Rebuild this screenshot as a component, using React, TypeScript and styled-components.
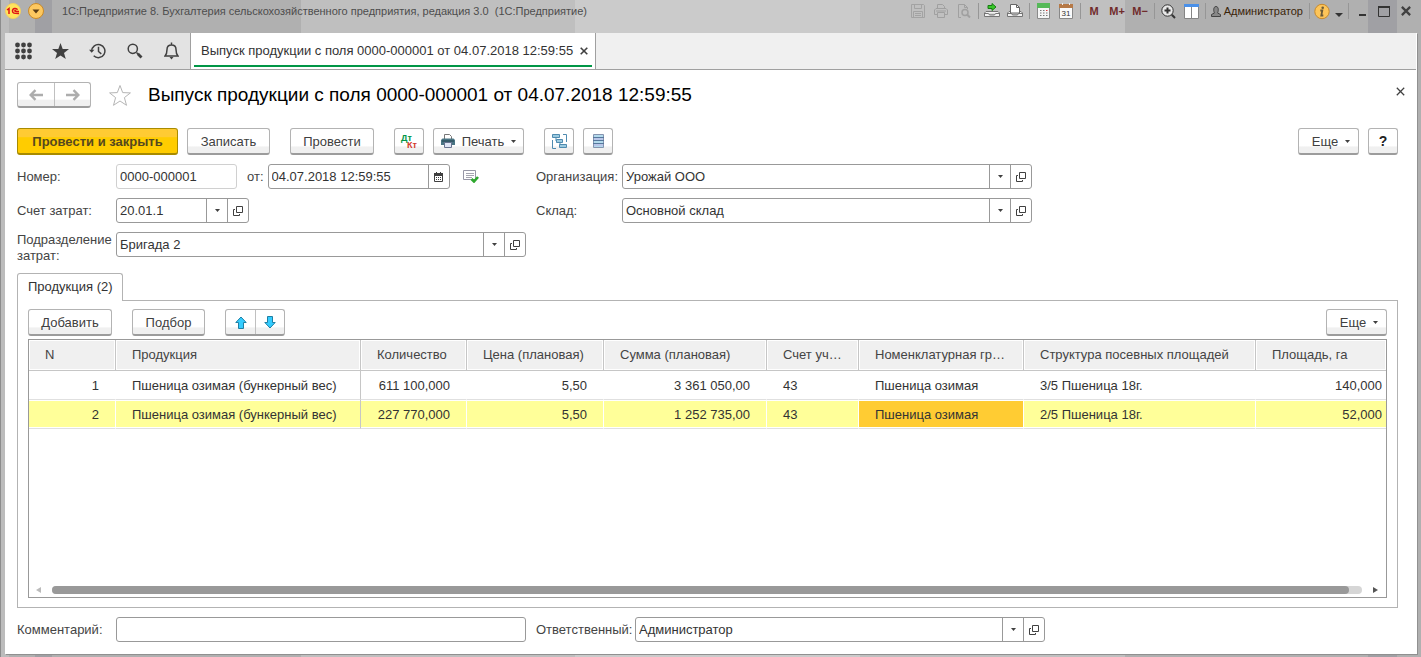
import React from 'react';
import styled, { createGlobalStyle, css } from 'styled-components';

const GlobalStyle = createGlobalStyle`
  *, *::before, *::after { box-sizing: border-box; }
  body { margin: 0; background: #c0c0c0; }
  body, button, input { font-family: "Liberation Sans", Arial, sans-serif; font-size: 13px; color: #333; }
  button, input { margin: 0; padding: 0; }
  svg { display: block; flex: none; }
`;

const Window = styled.div`
  display: flex;
  flex-direction: column;
  min-height: 100vh;
  padding: 0 4px 3px 5px;
  background: linear-gradient(90deg, #8c8c8c 0 1px, #bcbcbc 1px 9px, #b0b0b0 9px 35px, #a0a0a4 35px 52px,
    #b0b0b0 52px 301px, #bfbfbf 301px 575px, #cbcbcb 575px 860px, #c0c0c0 860px 1125px,
    #b0b0b0 1125px 1368px, #a0a0a4 1368px 1397px, #b0b0b0 1397px);
`;

const TitleBar = styled.header`
  display: flex;
  align-items: flex-start;
  height: 33px;
`;

const BrandIcons = styled.div`
  display: flex;
  gap: 7px;
  padding-top: 3px;
  width: 57px;
`;

const WindowTitle = styled.div`
  flex: 1;
  min-width: 0;
  font-size: 11px;
  line-height: 22px;
  white-space: nowrap;
  color: #4d4d4d;
`;

const SystemTools = styled.div`
  display: flex;
  align-items: center;
  height: 22px;
`;

const ToolButton = styled.button<{ $width?: number; $faded?: boolean }>`
  display: flex;
  align-items: center;
  justify-content: center;
  width: ${(p) => p.$width ?? 23}px;
  height: 22px;
  border: 0;
  background: none;
  font-size: 11px;
  font-weight: bold;
  color: #702c2c;
  opacity: ${(p) => (p.$faded ? 0.35 : 1)};
`;

const Divider = styled.span`
  width: 1px;
  height: 16px;
  margin: 0 2px;
  background: #969696;
`;

const UserButton = styled.button`
  display: flex;
  align-items: center;
  gap: 3px;
  height: 22px;
  padding: 0 4px 0 3px;
  border: 0;
  background: none;
  font-size: 11px;
  color: #3a2408;
`;

const Client = styled.div`
  display: flex;
  flex: 1;
  flex-direction: column;
  background: #fff;
  border-right: 1px solid #fff;
  box-shadow: 1px 1px 0 #909090;
`;

const Navigation = styled.nav`
  display: flex;
  height: 37px;
  background: #f0f0f0;
  border-bottom: 1px solid #a0a0a0;
`;

const NavTools = styled.div`
  display: flex;
  width: 186px;
  background: #e3e3e3;
  border-right: 1px solid #a0a0a0;
`;

const NavButton = styled.button`
  display: flex;
  align-items: center;
  justify-content: center;
  width: 37px;
  border: 0;
  background: none;
`;

const DocumentTab = styled.div`
  display: flex;
  align-items: center;
  padding: 0 3px;
  background: #fff;
  border-right: 1px solid #a0a0a0;
`;

const DocumentTabInner = styled.div`
  display: flex;
  align-items: center;
  gap: 7px;
  height: 34px;
  padding: 3px 4px 0 7px;
  border-bottom: 2px solid #009646;
  align-self: flex-start;
  white-space: nowrap;
`;

const BareButton = styled.button`
  display: flex;
  border: 0;
  background: none;
`;

const Form = styled.main`
  display: flex;
  flex: 1;
  flex-direction: column;
  padding: 12px 18px 12px 12px;
`;

const Heading = styled.div`
  display: flex;
  align-items: center;
  height: 26px;
`;

const Title = styled.h1`
  flex: 1;
  margin: 0 0 0 16px;
  font-size: 19px;
  font-weight: normal;
  line-height: 26px;
  color: #000;
`;

const FavouriteButton = styled(BareButton)`
  margin-left: 17px;
`;

const CloseButton = styled(BareButton)`
  margin: 0 -7px 7px 0;
`;

const buttonFace = css`
  border: 1px solid #b3b3b3;
  border-bottom: 2px solid #9c9c9c;
  background: linear-gradient(#fff 0 70%, #f0f0f0 75% 100%);
  color: #404040;
`;

const Button = styled.button<{ $width: number; $primary?: boolean }>`
  display: flex;
  align-items: center;
  justify-content: center;
  gap: 7px;
  width: ${(p) => p.$width}px;
  height: 27px;
  border-radius: 3px;
  white-space: nowrap;
  ${buttonFace}
  ${(p) =>
    p.$primary &&
    css`
      border-color: #a88b00;
      background: linear-gradient(#ffcb33 0 33%, #ffcc00 36% 100%);
      font-weight: bold;
      color: #55481f;
    `}
`;

const MoreButton = styled(Button)`
  padding-left: 5px;
`;

const HelpButton = styled(Button)`
  font-size: 14px;
  font-weight: bold;
  color: #222;
`;

const ButtonPair = styled.div<{ $cell: number; $height: number }>`
  display: flex;
  height: ${(p) => p.$height}px;
  border-radius: 3px;
  ${buttonFace}

  button {
    display: flex;
    align-items: center;
    justify-content: center;
    width: ${(p) => p.$cell}px;
    border: 0;
    background: none;
  }
  button + button { border-left: 1px solid #c0c0c0; }
`;

const Commands = styled.div`
  display: flex;
  gap: 9px;
  margin: 20px 0 9px;
`;

const CommandGroup = styled.div`
  display: flex;
  gap: 9px;
  margin-right: 11px;
`;

const Spacer = styled.span`
  flex: 1;
`;

const Fields = styled.div`
  display: flex;
  gap: 10px;
`;

const FieldColumn = styled.div`
  display: flex;
  flex-direction: column;
  flex: 0 1 509px;
  gap: 9px;
`;

const FieldRow = styled.div<{ $top?: boolean }>`
  display: flex;
  align-items: ${(p) => (p.$top ? 'flex-start' : 'center')};
  height: 25px;
`;

const Label = styled.label<{ $width?: number }>`
  flex: none;
  width: ${(p) => (p.$width ? `${p.$width}px` : 'auto')};
  line-height: 16px;
  color: #444;
`;

const Field = styled.div<{ $width: number; $quiet?: boolean }>`
  display: flex;
  flex: 0 1 ${(p) => p.$width}px;
  min-width: 0;
  height: 25px;
  border: 1px solid ${(p) => (p.$quiet ? '#d0d0d0' : '#999')};
  border-radius: 3px;
  background: #fff;

  input {
    flex: 1;
    min-width: 0;
    padding: 0 3px;
    border: 0;
    outline: 0;
    background: none;
  }
  button {
    display: flex;
    align-items: center;
    justify-content: center;
    width: 21px;
    border: 0;
    border-left: 1px solid #999;
    background: none;
  }
`;

const FromLabel = styled(Label)`
  margin: 0 4px 0 10px;
`;

const StatusIcon = styled.span`
  margin-left: 13px;
`;

const TabStrip = styled.div`
  display: flex;
  margin-top: 16px;
`;

const SectionTab = styled.button`
  height: 28px;
  margin-bottom: -1px;
  padding: 0 9px 2px 10px;
  border: 1px solid #b3b3b3;
  border-bottom: 0;
  border-radius: 3px 3px 0 0;
  background: #fff;
  z-index: 1;
`;

const Panel = styled.section`
  display: flex;
  flex: 1;
  flex-direction: column;
  margin-bottom: 9px;
  padding: 8px 10px 9px;
  border: 1px solid #b3b3b3;
`;

const PanelCommands = styled.div`
  display: flex;
  gap: 20px;
  margin-bottom: 3px;
`;

const Grid = styled.div`
  display: flex;
  flex: 1;
  flex-direction: column;
  justify-content: space-between;
  min-height: 180px;
  border: 1px solid #999;
`;

const Table = styled.table`
  width: 100%;
  table-layout: fixed;
  border-collapse: separate;
  border-spacing: 0;
`;

const HeadCell = styled.th`
  height: 31px;
  padding: 0 14px 2px 16px;
  overflow: hidden;
  border-right: 1px solid #c6c6c6;
  border-bottom: 1px solid #c6c6c6;
  background: #f0f0f0;
  box-shadow: inset 0 0 0 1px #fff;
  font-weight: normal;
  text-align: left;
  text-overflow: ellipsis;
  white-space: nowrap;
  color: #444;
  &:last-child { border-right: 0; padding-right: 0; }
`;

const Cell = styled.td<{ $right?: boolean; $active?: boolean; $selected?: boolean; $fixedEdge?: boolean }>`
  height: 29px;
  padding: 0 16px;
  border-right: 1px solid ${(p) => (p.$fixedEdge ? '#c6c6c6' : '#fff')};
  border-bottom: 1px solid #e0e0e0;
  background: ${(p) => (p.$active ? '#ffcc33' : p.$selected ? '#ffff99' : '#fff')};
  box-shadow: inset 0 1px #fff, inset 0 -1px #fff;
  text-align: ${(p) => (p.$right ? 'right' : 'left')};
  white-space: nowrap;
  &:last-child { border-right: 0; padding-right: 4px; }
`;

const ScrollRow = styled.div`
  display: flex;
  align-items: center;
  gap: 11px;
  height: 9px;
  margin: 0 8px 3px 7px;
`;

const ScrollTrack = styled.div`
  flex: 1;
  height: 8px;
  border-radius: 4px;
  background: #d6d6d6;
`;

const ScrollThumb = styled.div`
  width: 99%;
  height: 8px;
  border-radius: 4px;
  background: #999;
`;

const Footer = styled.footer`
  display: flex;
  align-items: center;
  height: 25px;
`;

const ResponsibleLabel = styled(Label)`
  margin-left: 10px;
`;

const Caret = () => (
  <svg width="5" height="3" viewBox="0 0 5 3"><path d="M0 0h5L2.5 3z" fill="#404040" /></svg>
);

const OpenIcon = () => (
  <svg width="10" height="10" viewBox="0 0 10 10" fill="none" stroke="#404040">
    <path d="M3.5.5h6v6h-6zM2 3.5H.5v6h6V8" />
  </svg>
);

const CrossIcon = ({ size, width }: { size: number; width: number }) => (
  <svg width={size} height={size} viewBox="0 0 8 8" stroke="#404040" strokeWidth={width}><path d="M.7.7l6.6 6.6M7.3.7L.7 7.3" /></svg>
);

const ArrowIcon = ({ left }: { left?: boolean }) => (
  <svg width="14" height="12" viewBox="0 0 14 12" fill="none" stroke="#adadad" strokeWidth="2.4">
    <path d={left ? 'M14 6H2M6.5 1.2L1.7 6l4.8 4.8' : 'M0 6h12M7.5 1.2L12.3 6l-4.8 4.8'} />
  </svg>
);

const MoveIcon = ({ down }: { down?: boolean }) => (
  <svg width="12" height="13" viewBox="0 0 12 13" fill="#33ccff" stroke="#1e7fa3">
    <path d={down ? 'M6 12L.8 6.5h2.7v-6h5v6h2.7z' : 'M6 1L.8 6.5h2.7v6h5v-6h2.7z'} />
  </svg>
);

const PrinterIcon = () => (
  <svg width="14" height="14" viewBox="0 0 14 14">
    <path d="M3.5 5V.5h5l2 2V5" fill="#fff" stroke="#777" />
    <path d="M1.5 4.5h11L14 6v5H0V6z" fill="#4a7584" />
    <path d="M1 7h12" stroke="#22434f" />
    <path d="M3.500 8.500h7v5h-7z" fill="#dfe5f5" stroke="#68738f" />
  </svg>
);

const StructureIcon = () => (
  <svg width="15" height="15" viewBox="0 0 15 15" fill="none" stroke="#4f8bb0">
    <path d="M.5 6v8.500H4M11 .5h3.500V8M4 4v3h1M8 8.500v3h1" />
    <path d="M.5.5h7v3h-7zM4.500 5.500h6v3h-6zM7.500 10.500h7v3h-7z" fill="#9ccbe0" />
  </svg>
);

const ListIcon = () => (
  <svg width="11" height="14" viewBox="0 0 11 14">
    <path d="M.5.5h10v13H.5z" fill="#b3daec" stroke="#8594b0" />
    <path d="M0 3.500h11M0 6.500h11M0 9.500h11" stroke="#56789c" />
    <path d="M1 5h9M1 11h9" stroke="#c0b3e6" />
  </svg>
);

const DtKtIcon = () => (
  <svg width="18" height="17" viewBox="0 0 18 17" fontSize="9" fontWeight="bold" fontFamily="Liberation Sans, sans-serif">
    <text x="1" y="8" fill="#009646">Дт</text>
    <text x="7" y="15" fill="#d33a2c">Кт</text>
  </svg>
);

const CalendarIcon = () => (
  <svg width="9" height="10" viewBox="0 0 9 10">
    <path d="M.5 1.500h8v8h-8z" fill="#fff" stroke="#404040" />
    <path d="M0 1h9v3H0zM2 0h1v1H2zM6 0h1v1H6zM2 5h1v1H2zM4 5h1v1H4zM6 5h1v1H6zM2 7h1v1H2zM4 7h1v1H4zM6 7h1v1H6z" fill="#404040" />
  </svg>
);

const PostedIcon = () => (
  <svg width="16" height="13" viewBox="0 0 16 13" fill="none">
    <path d="M.5.5h12v9H.5z" stroke="#9797a6" />
    <path d="M3 3.500h8M3 5.500h8M3 7.500h6" stroke="#a5a5b0" />
    <path d="M8.500 9l2.500 2.500L15 7" stroke="#2ea82e" strokeWidth="2.600" />
  </svg>
);

const MenuIcon = () => (
  <svg width="17" height="18" viewBox="0 0 17 18" fill="#404040">
    {[2.5, 8.5, 14.5].map((y) => [2.5, 8.5, 14.5].map((x) => <circle key={`${x}-${y}`} cx={x} cy={y + 0.5} r="2.400" />))}
  </svg>
);

const StarIcon = () => (
  <svg width="17" height="16" viewBox="0 0 17 16" fill="#404040"><path d="M8.500 0l2.200 5.900 6.300.2-5 3.900 1.800 6-5.300-3.500L3.200 16 5 10 0 6.100l6.300-.2z" /></svg>
);

const HistoryIcon = () => (
  <svg width="17" height="16" viewBox="0 0 17 16" fill="none" stroke="#404040" strokeWidth="1.500">
    <path d="M2.700 8a6.600 6.600 0 1 1 2 4.800M9.500 3.800V8.500l2.800 2.300" /><path d="M0 6.800h5.400L2.700 9.800z" fill="#404040" stroke="none" />
  </svg>
);

const SearchIcon = () => (
  <svg width="16" height="16" viewBox="0 0 16 16" fill="none" stroke="#404040" strokeWidth="1.500">
    <circle cx="5.800" cy="5.800" r="4.600" /><path d="M9.500 9.500l1.500 1.500" /><path d="M10.800 10.800l3.700 3.700" strokeWidth="2.800" />
  </svg>
);

const BellIcon = () => (
  <svg width="15" height="18" viewBox="0 0 15 18" fill="none" stroke="#404040" strokeWidth="1.500">
    <path d="M1 14h13c-2-2-2-3-2-6.500C12 4.500 10 3 7.500 3S3 4.500 3 7.500C3 11 3 12 1 14zM7.500 3V.5" /><path d="M5.500 15h4l-2 2.500z" fill="#404040" stroke="none" />
  </svg>
);

const FavouriteIcon = () => (
  <svg width="24" height="23" viewBox="0 0 24 23" fill="none" stroke="#b5b5b5">
    <path d="M12 1.500l2.700 7.100 7.700.3-6 4.700 2.100 7.700-6.500-4.300-6.500 4.300 2.100-7.700-6-4.700 7.700-.3z" />
  </svg>
);

const LogoIcon = () => (
  <svg width="16" height="16" viewBox="0 0 16 16">
    <circle cx="8" cy="8" r="7.500" fill="#ffe45c" stroke="#f3cf60" />
    <path d="M2 7l2-1.500V11M12.500 6.800c-.8-1.800-5-1.800-5 1.200 0 2.500 2 2.400 6.500 2.400M11 7.600c-1.200-.8-1.800.9 0 .9h3" fill="none" stroke="#e01515" strokeWidth="1.500" />
  </svg>
);

const DropIcon = () => (
  <svg width="16" height="16" viewBox="0 0 16 16">
    <circle cx="8" cy="8" r="7.500" fill="#fdc860" stroke="#c98a2a" /><path d="M4.500 6.500h7L8 10.500z" fill="#5a3c14" />
  </svg>
);

const SaveIcon = () => (
  <svg width="14" height="14" viewBox="0 0 14 14" fill="none" stroke="#707070">
    <path d="M.5.5h12l1 1v12H.5zM3.500.5v4h7v-4M2.500 13.500v-6h9v6M4 9.500h6M4 11.500h6" />
  </svg>
);

const GreyPrinterIcon = () => (
  <svg width="14" height="14" viewBox="0 0 14 14" fill="none" stroke="#666">
    <path d="M3.500 5V.5h5l2 2V5M3 10.500H.5V6L2 4.500h10L13.500 6v4.500H11M3.500 8.500h7v5h-7zM2 7h10" />
  </svg>
);

const PreviewIcon = () => (
  <svg width="14" height="14" viewBox="0 0 14 14" fill="none" stroke="#666">
    <path d="M4 13.500H1.500V.5h6l3 3V5M7.500.5v3h3" /><circle cx="8" cy="8.500" r="3" strokeWidth="1.500" /><path d="M10 10.500l3 3" strokeWidth="2" />
  </svg>
);

const Tray = () => (
  <path d="M.5 13.500V10L2 8.500h12l1.500 1.500v3.500zM.5 10.500h4l1 1.500h5l1-1.500h4" fill="#f2f2f2" stroke="#757575" />
);

const ExportIcon = () => (
  <svg width="16" height="16" viewBox="0 0 16 16">
    <Tray /><path d="M4 2.500h4V.5L12 4l-4 3.500v-2H4z" fill="#39c82a" stroke="#177c12" />
  </svg>
);

const ImportIcon = () => (
  <svg width="16" height="16" viewBox="0 0 16 16">
    <Tray /><path d="M3.500 10V1.500h6l3 3V10z" fill="#fff" stroke="#666" /><path d="M9.500 1.500v3h3" fill="none" stroke="#666" />
  </svg>
);

const CalculatorIcon = () => (
  <svg width="13" height="16" viewBox="0 0 13 16">
    <path d="M.5.5h12v15H.5z" fill="#f5f5f5" stroke="#8a8a8a" /><path d="M0 0h13v5H0z" fill="#55b958" />
    <path d="M3 7.500h1.500M6 7.500h1.500M3 10h1.500M6 10h1.500M3 12.500h1.500M6 12.500h1.500M9 10h1.500M9 12.500h1.500" stroke="#777" /><path d="M9 7.500h1.500" stroke="#e03a3a" />
  </svg>
);

const DateIcon = () => (
  <svg width="14" height="16" viewBox="0 0 14 16">
    <path d="M.5 1.500h13v14H.5z" fill="#fafafa" stroke="#888" /><path d="M0 1h14v4H0z" fill="#b67a48" /><path d="M3.500 0v2M10.500 0v2" stroke="#eee" />
    <text x="7" y="13" fontSize="8" textAnchor="middle" fill="#333" fontFamily="Liberation Sans, sans-serif" fontWeight="normal">31</text>
  </svg>
);

const ZoomIcon = () => (
  <svg width="15" height="15" viewBox="0 0 15 15" fill="none" stroke="#333">
    <circle cx="6.500" cy="6.500" r="5.700" fill="#e8e8e8" /><path d="M3.500 6.500h6M6.500 3.500v6" strokeWidth="2" /><path d="M10.800 10.800l3.200 3.200" strokeWidth="2" />
  </svg>
);

const PanesIcon = () => (
  <svg width="15" height="15" viewBox="0 0 15 15">
    <path d="M.5.5h14v14H.5z" fill="#fff" stroke="#858585" /><path d="M0 0h15v3H0z" fill="#4a90e8" /><path d="M7.500 3v12" stroke="#858585" />
  </svg>
);

const UserIcon = () => (
  <svg width="10" height="11" viewBox="0 0 10 11" fill="#888" stroke="#444">
    <path d="M.5 10.500v-2l3-1.500C2.500 5.500 2 .5 5 .5s2.500 5 1.500 6.500l3 1.500v2z" />
  </svg>
);

const InfoIcon = () => (
  <svg width="16" height="17" viewBox="0 0 16 17">
    <circle cx="8" cy="8.500" r="7.200" fill="#fdc55a" stroke="#c98a2a" /><circle cx="8.700" cy="4.800" r="1.300" fill="#6b5a38" /><path d="M6.300 7.500h2l-1 5h2" fill="none" stroke="#6b5a38" strokeWidth="1.800" />
  </svg>
);

const ComboField = ({ id, value, width }: { id: string; value: string; width: number }) => (
  <Field $width={width}>
    <input id={id} defaultValue={value} />
    <button aria-label="Выбрать"><Caret /></button>
    <button aria-label="Открыть"><OpenIcon /></button>
  </Field>
);

const columns: { title: string; width?: number; right?: boolean }[] = [
  { title: 'N', width: 87, right: true },
  { title: 'Продукция', width: 245 },
  { title: 'Количество', width: 106, right: true },
  { title: 'Цена (плановая)', width: 137, right: true },
  { title: 'Сумма (плановая)', width: 163, right: true },
  { title: 'Счет учета', width: 92 },
  { title: 'Номенклатурная группа', width: 165 },
  { title: 'Структура посевных площадей', width: 232 },
  { title: 'Площадь, га', right: true },
];

const rows = [
  ['1', 'Пшеница озимая (бункерный вес)', '611 100,000', '5,50', '3 361 050,00', '43', 'Пшеница озимая', '3/5 Пшеница 18г.', '140,000'],
  ['2', 'Пшеница озимая (бункерный вес)', '227 770,000', '5,50', '1 252 735,00', '43', 'Пшеница озимая', '2/5 Пшеница 18г.', '52,000'],
];

const documentName = 'Выпуск продукции с поля 0000-000001 от 04.07.2018 12:59:55';

export default function App() {
  return (
    <>
      <GlobalStyle />
      <Window>
        <TitleBar>
          <BrandIcons><LogoIcon /><DropIcon /></BrandIcons>
          <WindowTitle>1С:Предприятие 8. Бухгалтерия сельскохозяйственного предприятия, редакция 3.0&nbsp; (1С:Предприятие)</WindowTitle>
          <SystemTools>
            <ToolButton $faded aria-label="Сохранить"><SaveIcon /></ToolButton>
            <ToolButton $faded aria-label="Печать"><GreyPrinterIcon /></ToolButton>
            <ToolButton $faded aria-label="Просмотр"><PreviewIcon /></ToolButton>
            <Divider />
            <ToolButton aria-label="Отправить"><ExportIcon /></ToolButton>
            <ToolButton aria-label="Получить"><ImportIcon /></ToolButton>
            <Divider />
            <ToolButton aria-label="Калькулятор"><CalculatorIcon /></ToolButton>
            <ToolButton aria-label="Календарь"><DateIcon /></ToolButton>
            <Divider />
            <ToolButton>M</ToolButton>
            <ToolButton>M+</ToolButton>
            <ToolButton>M−</ToolButton>
            <Divider />
            <ToolButton aria-label="Увеличить"><ZoomIcon /></ToolButton>
            <ToolButton aria-label="Панели"><PanesIcon /></ToolButton>
            <Divider />
            <UserButton><UserIcon />Администратор</UserButton>
            <Divider />
            <ToolButton $width={20} aria-label="Информация"><InfoIcon /></ToolButton>
            <ToolButton $width={14} aria-label="Дополнительно"><svg width="8" height="12" viewBox="0 0 8 12"><path d="M0 8h8L4 12z" fill="#333" /></svg></ToolButton>
            <Divider />
            <ToolButton $width={22} aria-label="Свернуть"><svg width="7" height="10" viewBox="0 0 7 10"><path d="M0 8h7v2H0z" fill="#333" /></svg></ToolButton>
            <ToolButton $width={22} aria-label="Развернуть"><svg width="12" height="11" viewBox="0 0 12 11"><path d="M.5 1h11v9.500H.5z" fill="none" stroke="#333" /><path d="M0 1h12" stroke="#333" strokeWidth="2" /></svg></ToolButton>
            <ToolButton $width={22} aria-label="Закрыть"><CrossIcon size={10} width={1.8} /></ToolButton>
          </SystemTools>
        </TitleBar>

        <Client>
          <Navigation>
            <NavTools>
              <NavButton aria-label="Меню"><MenuIcon /></NavButton>
              <NavButton aria-label="Избранное"><StarIcon /></NavButton>
              <NavButton aria-label="История"><HistoryIcon /></NavButton>
              <NavButton aria-label="Поиск"><SearchIcon /></NavButton>
              <NavButton aria-label="Оповещения"><BellIcon /></NavButton>
            </NavTools>
            <DocumentTab>
              <DocumentTabInner>
                <span>{documentName}</span>
                <BareButton aria-label="Закрыть вкладку"><CrossIcon size={8} width={1.6} /></BareButton>
              </DocumentTabInner>
            </DocumentTab>
          </Navigation>

          <Form>
            <Heading>
              <ButtonPair $cell={36} $height={26}>
                <button aria-label="Назад"><ArrowIcon left /></button>
                <button aria-label="Вперед"><ArrowIcon /></button>
              </ButtonPair>
              <FavouriteButton aria-label="В избранное"><FavouriteIcon /></FavouriteButton>
              <Title>{documentName}</Title>
              <CloseButton aria-label="Закрыть"><CrossIcon size={9} width={1.1} /></CloseButton>
            </Heading>

            <Commands>
              <CommandGroup>
                <Button $width={161} $primary>Провести и закрыть</Button>
                <Button $width={83}>Записать</Button>
              </CommandGroup>
              <CommandGroup>
                <Button $width={84}>Провести</Button>
              </CommandGroup>
              <CommandGroup>
                <Button $width={30} aria-label="Дт Кт"><DtKtIcon /></Button>
                <Button $width={91}><PrinterIcon />Печать <Caret /></Button>
              </CommandGroup>
              <CommandGroup>
                <Button $width={30} aria-label="Структура"><StructureIcon /></Button>
                <Button $width={30} aria-label="Список"><ListIcon /></Button>
              </CommandGroup>
              <Spacer />
              <MoreButton $width={61}>Еще <Caret /></MoreButton>
              <HelpButton $width={30}>?</HelpButton>
            </Commands>

            <Fields>
              <FieldColumn>
                <FieldRow>
                  <Label $width={99} htmlFor="number">Номер:</Label>
                  <Field $width={121} $quiet><input id="number" defaultValue="0000-000001" /></Field>
                  <FromLabel htmlFor="date">от:</FromLabel>
                  <Field $width={182}>
                    <input id="date" defaultValue="04.07.2018 12:59:55" />
                    <button aria-label="Календарь"><CalendarIcon /></button>
                  </Field>
                  <StatusIcon><PostedIcon /></StatusIcon>
                </FieldRow>
                <FieldRow>
                  <Label $width={99} htmlFor="account">Счет затрат:</Label>
                  <ComboField id="account" value="20.01.1" width={133} />
                </FieldRow>
                <FieldRow $top>
                  <Label $width={99} htmlFor="department">Подразделение затрат:</Label>
                  <ComboField id="department" value="Бригада 2" width={410} />
                </FieldRow>
              </FieldColumn>
              <FieldColumn>
                <FieldRow>
                  <Label $width={86} htmlFor="organization">Организация:</Label>
                  <ComboField id="organization" value="Урожай ООО" width={410} />
                </FieldRow>
                <FieldRow>
                  <Label $width={86} htmlFor="warehouse">Склад:</Label>
                  <ComboField id="warehouse" value="Основной склад" width={410} />
                </FieldRow>
              </FieldColumn>
            </Fields>

            <TabStrip><SectionTab>Продукция (2)</SectionTab></TabStrip>
            <Panel>
              <PanelCommands>
                <Button $width={84}>Добавить</Button>
                <Button $width={73}>Подбор</Button>
                <ButtonPair $cell={29} $height={27}>
                  <button aria-label="Вверх"><MoveIcon /></button>
                  <button aria-label="Вниз"><MoveIcon down /></button>
                </ButtonPair>
                <Spacer />
                <MoreButton $width={61}>Еще <Caret /></MoreButton>
              </PanelCommands>
              <Grid>
                <Table>
                  <colgroup>{columns.map((c) => <col key={c.title} width={c.width} />)}</colgroup>
                  <thead><tr>{columns.map((c) => <HeadCell key={c.title}>{c.title}</HeadCell>)}</tr></thead>
                  <tbody>
                    {rows.map((row, r) => (
                      <tr key={row[0]}>
                        {row.map((text, c) => (
                          <Cell key={columns[c].title} $right={columns[c].right} $selected={r === 1} $active={r === 1 && c === 6} $fixedEdge={c === 1}>{text}</Cell>
                        ))}
                      </tr>
                    ))}
                  </tbody>
                </Table>
                <ScrollRow>
                  <svg width="5" height="6" viewBox="0 0 5 6"><path d="M5 0v6L0 3z" fill="#bbb" /></svg>
                  <ScrollTrack><ScrollThumb /></ScrollTrack>
                  <svg width="5" height="6" viewBox="0 0 5 6"><path d="M0 0v6l5-3z" fill="#555" /></svg>
                </ScrollRow>
              </Grid>
            </Panel>

            <Footer>
              <Label $width={99} htmlFor="comment">Комментарий:</Label>
              <Field $width={410}><input id="comment" /></Field>
              <ResponsibleLabel $width={99} htmlFor="responsible">Ответственный:</ResponsibleLabel>
              <ComboField id="responsible" value="Администратор" width={410} />
            </Footer>
          </Form>
        </Client>
      </Window>
    </>
  );
}
